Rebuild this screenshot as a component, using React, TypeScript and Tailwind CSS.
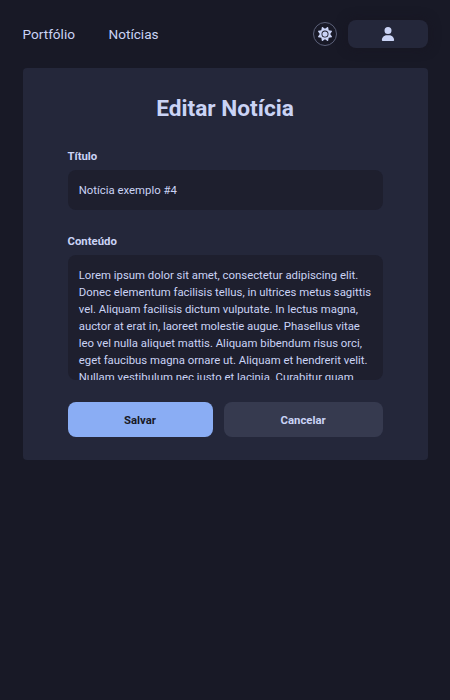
import { FaSun, FaUser } from "react-icons/fa6";

const content =
  "Lorem ipsum dolor sit amet, consectetur adipiscing elit. Donec elementum facilisis tellus, in ultrices metus sagittis vel. Aliquam facilisis dictum vulputate. In lectus magna, auctor at erat in, laoreet molestie augue. Phasellus vitae leo vel nulla aliquet mattis. Aliquam bibendum risus orci, eget faucibus magna ornare ut. Aliquam et hendrerit velit. Nullam vestibulum nec justo et lacinia. Curabitur quam";

function Header() {
  return (
    <header className="flex h-[68px] items-center justify-between pr-[22px] pl-[22.5px]">
      <nav className="flex gap-[33.5px] text-[13.6px]">
        <a href="#">Portfólio</a>
        <a href="#">Notícias</a>
      </nav>
      <div className="flex items-center gap-[11px]">
        <button aria-label="Tema" className="flex size-6 items-center justify-center rounded-full border border-[#5b6078]">
          <FaSun className="size-[14px]" />
        </button>
        <button aria-label="Perfil" className="flex h-7 w-20 items-center justify-center rounded-lg bg-[#24273a] shadow-[0_0_12px_rgba(24,20,32,0.6)]">
          <FaUser className="h-[14px] w-auto" />
        </button>
      </div>
    </header>
  );
}

export default function App() {
  return (
    <div className="min-h-screen bg-[#181926] font-['Roboto',sans-serif] text-[11.35px] text-[#cad3f5]">
      <Header />
      <main className="mx-[22.5px] h-[392px] rounded bg-[#24273a] px-[45px] pt-[27px]">
        <h1 className="text-center text-[22.7px] leading-[27px] font-bold">Editar Notícia</h1>
        <form className="flex flex-col">
          <label htmlFor="titulo" className="mt-[26px] leading-4 font-bold">Título</label>
          <input
            id="titulo"
            defaultValue="Notícia exemplo #4"
            className="mt-[6px] h-10 rounded-lg bg-[#1e1f2e] px-[11.25px] outline-none"
          />
          <label htmlFor="conteudo" className="mt-[23px] leading-4 font-bold">Conteúdo</label>
          <textarea
            id="conteudo"
            defaultValue={content}
            className="mt-[6px] h-[125px] resize-none overflow-hidden rounded-lg bg-[#1e1f2e] px-[11.25px] pt-[12px] leading-[17px] outline-none"
          />
          <div className="mt-[22px] flex gap-[11.25px]">
            <button type="button" className="h-[35px] w-[145px] rounded-lg bg-[#8aadf4] pt-[2px] font-bold text-[#181926]">Salvar</button>
            <button type="button" className="h-[35px] flex-1 rounded-lg bg-[#363a4f] pt-[2px] font-bold">Cancelar</button>
          </div>
        </form>
      </main>
    </div>
  );
}
